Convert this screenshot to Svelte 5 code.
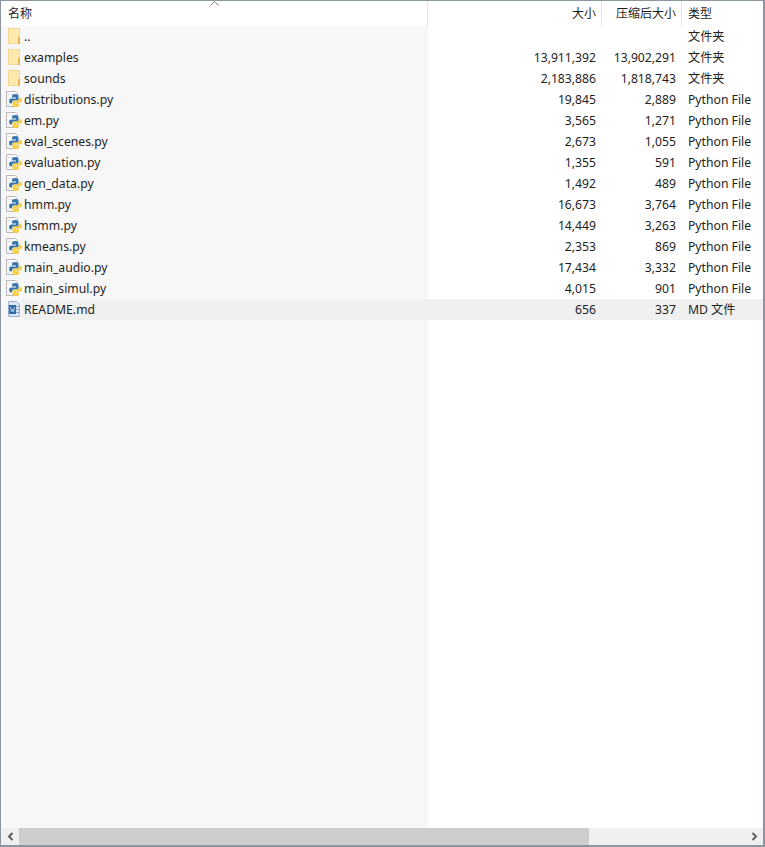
<script>
  const files = [
    { name: '..', size: '', packed: '', type: '文件夹', icon: 'folder' },
    { name: 'examples', size: '13,911,392', packed: '13,902,291', type: '文件夹', icon: 'folder' },
    { name: 'sounds', size: '2,183,886', packed: '1,818,743', type: '文件夹', icon: 'folder' },
    { name: 'distributions.py', size: '19,845', packed: '2,889', type: 'Python File', icon: 'py' },
    { name: 'em.py', size: '3,565', packed: '1,271', type: 'Python File', icon: 'py' },
    { name: 'eval_scenes.py', size: '2,673', packed: '1,055', type: 'Python File', icon: 'py' },
    { name: 'evaluation.py', size: '1,355', packed: '591', type: 'Python File', icon: 'py' },
    { name: 'gen_data.py', size: '1,492', packed: '489', type: 'Python File', icon: 'py' },
    { name: 'hmm.py', size: '16,673', packed: '3,764', type: 'Python File', icon: 'py' },
    { name: 'hsmm.py', size: '14,449', packed: '3,263', type: 'Python File', icon: 'py' },
    { name: 'kmeans.py', size: '2,353', packed: '869', type: 'Python File', icon: 'py' },
    { name: 'main_audio.py', size: '17,434', packed: '3,332', type: 'Python File', icon: 'py' },
    { name: 'main_simul.py', size: '4,015', packed: '901', type: 'Python File', icon: 'py' },
    { name: 'README.md', size: '656', packed: '337', type: 'MD 文件', icon: 'doc', hover: true }
  ];
</script>

<div class="window">
  <div class="header">
    <div class="col name">
      名称
      <svg class="sort" width="9" height="5" viewBox="0 0 9 5"><path d="M0.5 4.5 L4.5 0.5 L8.5 4.5" fill="none" stroke="#7c7c7c" /></svg>
    </div>
    <div class="col num">大小</div>
    <div class="col num">压缩后大小</div>
    <div class="col type">类型</div>
  </div>

  <div class="list">
    {#each files as f}
      <div class="row" class:hover={f.hover}>
        <div class="cell name">
          {#if f.icon === 'folder'}
            <svg class="icon" width="16" height="17" viewBox="0 0 16 17">
              <rect x="2.5" y="0.5" width="11" height="15" fill="#ffe9ad" stroke="#f3d893" />
              <rect x="12" y="9" width="2" height="7" fill="#e6b655" />
            </svg>
          {:else if f.icon === 'py'}
            <svg class="icon" width="16" height="17" viewBox="0 0 16 17">
              <path d="M0.5 0.5 H9.5 L11.5 2.5 V15.5 H0.5 Z" fill="#fafafa" stroke="#b8b8b8" />
              <path d="M2 3.5 H7 M2 13.5 H4" stroke="#cfcfcf" stroke-dasharray="1 1" />
              <path d="M9.5 3 Q6 3 6 5 V6.5 H10 V7.5 H5 Q3 7.5 3 10 Q3 12.5 5 12.5 H6 V11 Q6 9.5 8 9.5 H11 Q12.5 9.5 12.5 8 V5 Q12.5 3 9.5 3 Z" fill="#3776ab" />
              <path d="M9.5 3 Q6 3 6 5 V6.5 H10 V7.5 H5 Q3 7.5 3 10 Q3 12.5 5 12.5 H6 V11 Q6 9.5 8 9.5 H11 Q12.5 9.5 12.5 8 V5 Q12.5 3 9.5 3 Z" fill="#f7cf45" transform="rotate(180 9.5 9.5)" />
            </svg>
          {:else}
            <svg class="icon" width="16" height="17" viewBox="0 0 16 17">
              <path d="M2.5 0.5 H10.5 L13.5 3.5 V15.5 H2.5 Z" fill="#dde7f3" stroke="#9ab0ca" />
              <rect x="3" y="4" width="7" height="9" fill="#2f69ad" />
              <rect x="10" y="5" width="3" height="1" fill="#8aa6cc" />
              <rect x="10" y="8" width="3" height="1" fill="#8aa6cc" />
              <rect x="10" y="11" width="3" height="1" fill="#8aa6cc" />
              <path d="M4.5 6 L5.5 11 L6.5 8 L7.5 11 L8.5 6" fill="none" stroke="#cfe0f2" stroke-width="0.8" />
            </svg>
          {/if}
          <span class="label">{f.name}</span>
        </div>
        <div class="cell num">{f.size}</div>
        <div class="cell num">{f.packed}</div>
        <div class="cell type">{f.type}</div>
      </div>
    {/each}
  </div>

  <div class="scrollbar">
    <button class="arrow" aria-label="left">
      <svg width="7" height="9" viewBox="0 0 7 9"><path d="M5.5 1 L2 4.5 L5.5 8" fill="none" stroke="#606060" stroke-width="2" /></svg>
    </button>
    <div class="track"><div class="thumb"></div></div>
    <button class="arrow" aria-label="right">
      <svg width="7" height="9" viewBox="0 0 7 9"><path d="M1.5 1 L5 4.5 L1.5 8" fill="none" stroke="#606060" stroke-width="2" /></svg>
    </button>
  </div>
</div>

<style>
  :global(body) {
    margin: 0;
    background: #fff;
  }

  .window {
    box-sizing: border-box;
    width: 765px;
    height: 847px;
    display: flex;
    flex-direction: column;
    border: 1px solid #8d96a0;
    border-bottom-width: 2px;
    border-right-width: 2px;
    font-family: "Noto Sans", "Noto Sans CJK SC", sans-serif;
    font-size: 12.2px;
    color: #1e1e1e;
    overflow: hidden;
  }

  .header,
  .row {
    display: grid;
    grid-template-columns: 427px 174px 80px 1fr;
  }

  .header {
    height: 25px;
    background: #fff;
    font-size: 12px;
  }

  .col {
    position: relative;
    border-right: 1px solid #e5e5e5;
    margin-bottom: 1px;
    line-height: 25px;
  }

  .col.name {
    padding-left: 7px;
  }

  .col.num {
    text-align: right;
    padding-right: 5px;
  }

  .col.type {
    border-right: 0;
    padding-left: 6px;
  }

  .sort {
    position: absolute;
    left: 209px;
    top: 0;
  }

  .list {
    flex: 1;
    background: linear-gradient(90deg, #f7f7f7 427px, #fff 427px);
  }

  .row {
    height: 21px;
    line-height: 21px;
  }

  .row.hover {
    background: linear-gradient(90deg, transparent 21px, #f0f0f0 21px);
  }

  .cell {
    white-space: nowrap;
  }

  .cell.name {
    display: flex;
    align-items: center;
    padding-left: 5px;
  }

  .icon {
    flex: none;
    margin-right: 2px;
  }

  .cell.num {
    text-align: right;
    padding-right: 6px;
  }

  .cell.type {
    padding-left: 6px;
  }

  .scrollbar {
    height: 17px;
    display: flex;
    background: #f0f0f0;
  }

  .arrow {
    width: 18px;
    height: 17px;
    flex: none;
    border: 0;
    padding: 0;
    background: #f0f0f0;
    display: flex;
    align-items: center;
    justify-content: center;
  }

  .track {
    flex: 1;
  }

  .thumb {
    width: 570px;
    height: 100%;
    background: #cdcdcd;
  }
</style>
